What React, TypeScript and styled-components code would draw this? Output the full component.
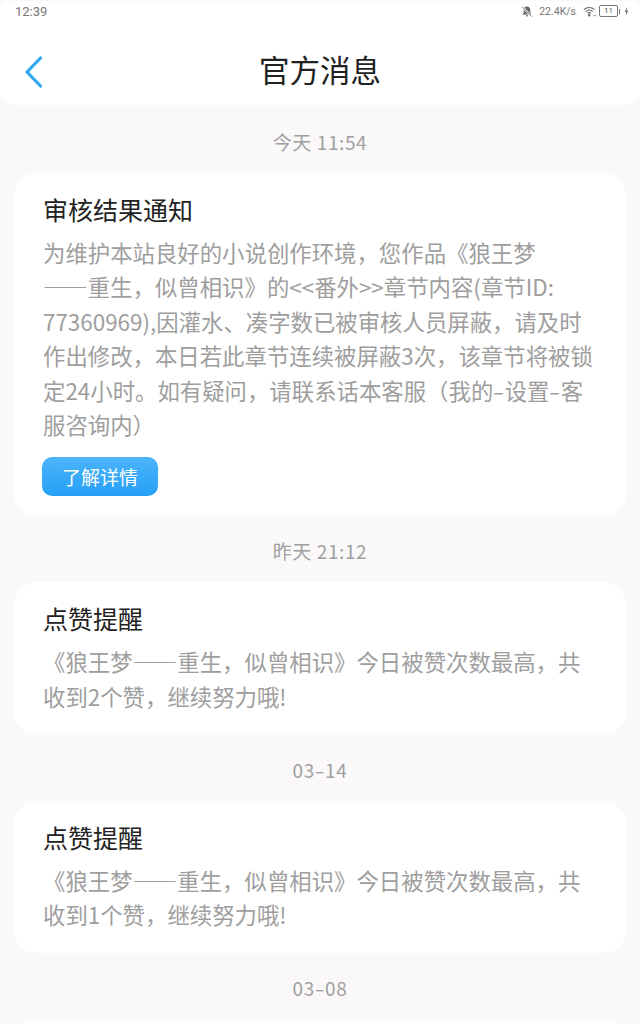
import React from "react";
import styled, { createGlobalStyle } from "styled-components";

const GlobalStyle = createGlobalStyle`
  html, body {
    margin: 0;
    padding: 0;
    background: #faf8f9;
    font-family: "Noto Sans CJK SC", "Noto Sans", sans-serif;
  }
`;

interface Message {
  time: string;
  title: string;
  lines: string[];
  action?: string;
}

const messages: Message[] = [
  {
    time: "今天 11:54",
    title: "审核结果通知",
    lines: [
      "为维护本站良好的小说创作环境，您作品《狼王梦",
      "——重生，似曾相识》的<<番外>>章节内容(章节ID:",
      "77360969),因灌水、凑字数已被审核人员屏蔽，请及时",
      "作出修改，本日若此章节连续被屏蔽3次，该章节将被锁",
      "定24小时。如有疑问，请联系话本客服（我的-设置-客",
      "服咨询内）",
    ],
    action: "了解详情",
  },
  {
    time: "昨天 21:12",
    title: "点赞提醒",
    lines: [
      "《狼王梦——重生，似曾相识》今日被赞次数最高，共",
      "收到2个赞，继续努力哦!",
    ],
  },
  {
    time: "03-14",
    title: "点赞提醒",
    lines: [
      "《狼王梦——重生，似曾相识》今日被赞次数最高，共",
      "收到1个赞，继续努力哦!",
    ],
  },
];

// The hyphen of this font is too short for the app's look, so it gets its own stretched span
const withHyphens = (text: string) =>
  text.split("-").map((part, i) => (
    <React.Fragment key={i}>
      {i > 0 && <Hyphen>-</Hyphen>}
      {part}
    </React.Fragment>
  ));

export default function App() {
  return (
    <Page lang="zh-CN">
      <GlobalStyle />
      <Header>
        <StatusBar>
          <Clock>12:39</Clock>
          <StatusIcons>
            <svg width="12" height="13" viewBox="0 0 14 14" fill="#666">
              <path d="M7 1.2c-2.4 0-3.8 1.8-3.8 4v3L1.8 10.4h10.4L10.8 8.200v-3c0-2.200-1.400-4-3.800-4z" />
              <path d="M5.600 11.300h2.800a1.400 1.400 0 0 1-2.800 0z" />
              <path d="M1.500 1.500l11 11.500" stroke="#fff" strokeWidth="2.400" />
              <path d="M1.500 1.500l11 11.500" stroke="#666" strokeWidth="1.100" />
            </svg>
            <Speed>22.4K/s</Speed>
            <svg width="14" height="11" viewBox="0 0 17 13" fill="none" stroke="#666" strokeWidth="1.300">
              <path d="M1 4.300c3.700-3.500 9.300-3.500 13 0" />
              <path d="M3.200 6.600c2.500-2.300 6.100-2.300 8.600 0" />
              <path d="M5.400 8.800c1.300-1.100 2.900-1.100 4.200 0" />
              <circle cx="7.500" cy="11" r="0.800" fill="#666" />
              <path d="M13 11.500h.8M15 11.500h.8" strokeWidth="1.400" />
            </svg>
            <Battery>
              <BatteryLevel>11</BatteryLevel>
              <BatteryTip />
            </Battery>
            <svg width="5" height="11" viewBox="0 0 6 12" fill="#666">
              <path d="M3.800 0.500L1 6.600h1.800L2.200 11.500 5 5.200H3.200z" />
            </svg>
          </StatusIcons>
        </StatusBar>
        <NavBar>
          <BackButton aria-label="返回">
            <svg width="20" height="32" viewBox="0 0 20 32" fill="none" stroke="#2ea7ee" strokeWidth="3.200" strokeLinecap="round" strokeLinejoin="round">
              <path d="M16.500 2L3 16l13.500 14" />
            </svg>
          </BackButton>
          <Title>官方消息</Title>
        </NavBar>
      </Header>
      <Feed>
        {messages.map((m) => (
          <Entry key={m.time}>
            <Time>{withHyphens(m.time)}</Time>
            <Card>
              <CardTitle>{m.title}</CardTitle>
              <CardBody>
                {m.lines.map((line) => (
                  <BodyLine key={line}>{withHyphens(line)}</BodyLine>
                ))}
              </CardBody>
              {m.action && <Action>{m.action}</Action>}
            </Card>
          </Entry>
        ))}
        <Entry>
          <Time>{withHyphens("03-08")}</Time>
          <Card />
        </Entry>
      </Feed>
    </Page>
  );
}

const Page = styled.div`
  width: 640px;
  height: 1024px;
  overflow: hidden;
  background: #faf8f9;
`;

const Header = styled.header`
  height: 104px;
  margin-top: 1px;
  background: #fff;
  border-radius: 8px 8px 14px 14px;
`;

const StatusBar = styled.div`
  height: 20px;
  padding: 0 11px 0 15px;
  display: flex;
  align-items: center;
  justify-content: space-between;
  color: #777;
`;

const Clock = styled.span`
  font-family: "Roboto", sans-serif;
  font-size: 13px;
`;

const StatusIcons = styled.div`
  display: flex;
  align-items: center;
  gap: 6px;
`;

const Speed = styled.span`
  font-family: "Roboto", sans-serif;
  font-size: 10.500px;
  margin-right: 1px;
`;

const Battery = styled.div`
  display: flex;
  align-items: center;
  gap: 1px;
  margin-left: -4px;
  margin-right: -2px;
`;

const BatteryLevel = styled.div`
  width: 17px;
  height: 10px;
  border: 1px solid #777;
  border-radius: 2px;
  font-family: "Roboto", sans-serif;
  font-size: 8px;
  line-height: 10px;
  text-align: center;
  color: #555;
`;

const BatteryTip = styled.div`
  width: 1px;
  height: 5px;
  background: #777;
`;

const NavBar = styled.div`
  position: relative;
  height: 84px;
  display: flex;
  align-items: center;
  justify-content: center;
  padding-top: 12px;
  box-sizing: border-box;
`;

const BackButton = styled.div`
  position: absolute;
  left: 24px;
  top: 35px;
  display: flex;
`;

const Title = styled.h1`
  margin: 0;
  font-size: 30.500px;
  font-weight: 400;
  line-height: 40px;
  color: #222;
`;

const Feed = styled.main`
  display: flex;
  flex-direction: column;
  padding: 1.600px 14px 0;
`;

const Entry = styled.section`
  display: flex;
  flex-direction: column;
`;

const Time = styled.div`
  height: 66.400px;
  line-height: 69px;
  text-align: center;
  font-size: 19px;
  letter-spacing: 0.6px;
  color: #a0a0a0;
`;

const Hyphen = styled.span`
  display: inline-block;
  padding: 0 0.08em;
  transform: scaleX(1.5);
`;

const Card = styled.article`
  min-height: 100px;
  background: #fff;
  border-radius: 22px;
  padding: 18px 29px 21.400px 29px;
`;

const CardTitle = styled.h2`
  margin: 0 0 8px;
  font-size: 25px;
  font-weight: 400;
  line-height: 36px;
  color: #222;
`;

const CardBody = styled.div`
  font-size: 22.400px;
  line-height: 34.400px;
  color: #9e9e9e;
`;

const BodyLine = styled.div`
  white-space: nowrap;
`;

const Action = styled.button`
  display: block;
  width: 116px;
  height: 39px;
  margin: 15.600px 0 -1.400px -1px;
  padding: 0;
  border: none;
  border-radius: 10px;
  background: linear-gradient(180deg, #4db4fb 0%, #259ff7 100%);
  color: #fff;
  font-family: inherit;
  font-size: 19px;
`;
